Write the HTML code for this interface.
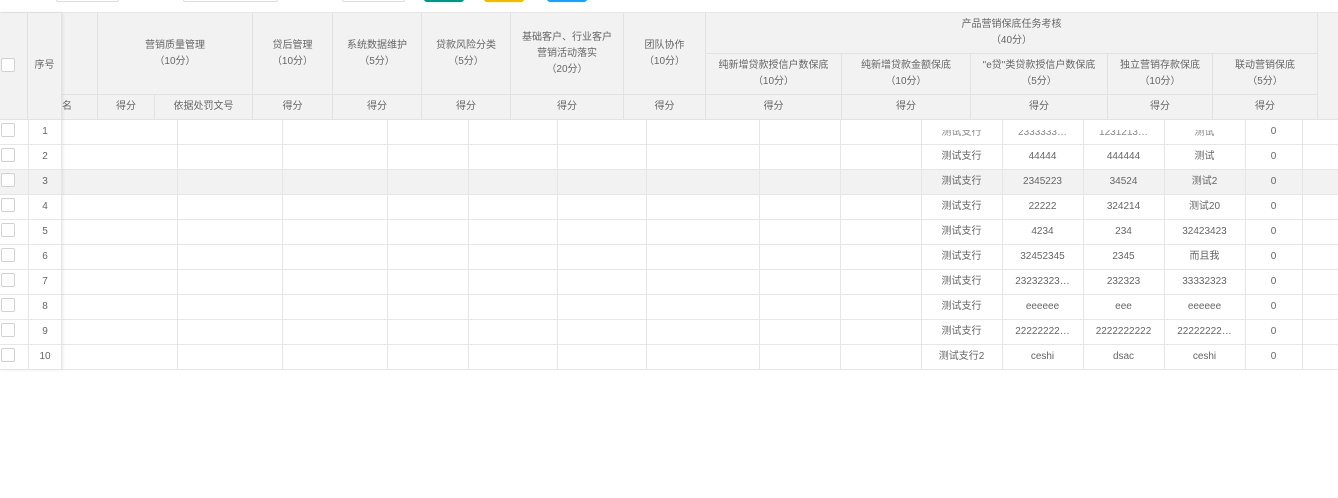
<!DOCTYPE html>
<html><head><meta charset="utf-8"><style>
body{margin:0;width:1338px;height:498px;background:#fff;position:relative;overflow:hidden;font-family:"Liberation Sans","Noto Sans CJK SC",sans-serif;font-size:10px;color:#666}
div{box-sizing:border-box}
.a{position:absolute}
.h{position:absolute;background:#f2f2f2;border-right:1px solid #e2e2e2;border-bottom:1px solid #e2e2e2;display:flex;align-items:center;justify-content:center;text-align:center;line-height:16px}
.vl{position:absolute;width:1px;background:#e6e6e6}
.hl{position:absolute;height:1px;background:#e6e6e6}
.c{position:absolute;height:25px;line-height:25px;text-align:center;white-space:nowrap;overflow:hidden}
.cb{position:absolute;left:1px;width:14px;height:14px;border:1px solid #d2d2d2;border-radius:2px;background:#fff}
</style></head><body>
<div class="a" style="left:56px;top:-4px;width:63px;height:6px;border:1px solid #ddd;border-radius:2px"></div>
<div class="a" style="left:183px;top:-4px;width:95px;height:6px;border:1px solid #ddd;border-radius:2px"></div>
<div class="a" style="left:342px;top:-4px;width:63px;height:6px;border:1px solid #ddd;border-radius:2px"></div>
<div class="a" style="left:424px;top:-4px;width:40px;height:6px;background:#009688;border-radius:3px"></div>
<div class="a" style="left:484px;top:-4px;width:40px;height:6px;background:#f5b800;border-radius:3px"></div>
<div class="a" style="left:547px;top:-4px;width:40px;height:6px;background:#1e9fff;border-radius:3px"></div>

<div class="hl" style="left:0;top:12px;width:1338px"></div>
<!-- header -->
<div class="h" style="left:62px;top:13px;width:36px;height:82px"></div>
<div class="h" style="left:62px;top:95px;width:36px;height:25px;justify-content:flex-start">名</div>
<div class="h" style="left:98px;top:13px;width:155px;height:82px">营销质量管理<br>（10分）</div>
<div class="h" style="left:98px;top:95px;width:57px;height:25px">得分</div>
<div class="h" style="left:155px;top:95px;width:98px;height:25px">依据处罚文号</div>
<div class="h" style="left:253px;top:13px;width:80px;height:82px">贷后管理<br>（10分）</div>
<div class="h" style="left:253px;top:95px;width:80px;height:25px">得分</div>
<div class="h" style="left:333px;top:13px;width:89px;height:82px">系统数据维护<br>（5分）</div>
<div class="h" style="left:333px;top:95px;width:89px;height:25px">得分</div>
<div class="h" style="left:422px;top:13px;width:89px;height:82px">贷款风险分类<br>（5分）</div>
<div class="h" style="left:422px;top:95px;width:89px;height:25px">得分</div>
<div class="h" style="left:511px;top:13px;width:113px;height:82px">基础客户、行业客户<br>营销活动落实<br>（20分）</div>
<div class="h" style="left:511px;top:95px;width:113px;height:25px">得分</div>
<div class="h" style="left:624px;top:13px;width:82px;height:82px">团队协作<br>（10分）</div>
<div class="h" style="left:624px;top:95px;width:82px;height:25px">得分</div>
<div class="h" style="left:706px;top:13px;width:612px;height:41px">产品营销保底任务考核<br>（40分）</div>
<div class="h" style="left:706px;top:54px;width:136px;height:41px">纯新增贷款授信户数保底<br>（10分）</div>
<div class="h" style="left:842px;top:54px;width:129px;height:41px">纯新增贷款金额保底<br>（10分）</div>
<div class="h" style="left:971px;top:54px;width:137px;height:41px">"e贷"类贷款授信户数保底<br>（5分）</div>
<div class="h" style="left:1108px;top:54px;width:105px;height:41px">独立营销存款保底<br>（10分）</div>
<div class="h" style="left:1213px;top:54px;width:105px;height:41px">联动营销保底<br>（5分）</div>
<div class="h" style="left:706px;top:95px;width:136px;height:25px">得分</div>
<div class="h" style="left:842px;top:95px;width:129px;height:25px">得分</div>
<div class="h" style="left:971px;top:95px;width:137px;height:25px">得分</div>
<div class="h" style="left:1108px;top:95px;width:105px;height:25px">得分</div>
<div class="h" style="left:1213px;top:95px;width:105px;height:25px">得分</div>
<div class="h" style="left:1318px;top:13px;width:20px;height:107px;border-right:0"></div>

<!-- body rows -->
<div class="a" style="left:0;top:170px;width:1338px;height:24px;background:#f2f2f2"></div>
<div class="hl" style="left:0;top:144px;width:1338px"></div>
<div class="hl" style="left:0;top:169px;width:1338px"></div>
<div class="hl" style="left:0;top:194px;width:1338px"></div>
<div class="hl" style="left:0;top:219px;width:1338px"></div>
<div class="hl" style="left:0;top:244px;width:1338px"></div>
<div class="hl" style="left:0;top:269px;width:1338px"></div>
<div class="hl" style="left:0;top:294px;width:1338px"></div>
<div class="hl" style="left:0;top:319px;width:1338px"></div>
<div class="hl" style="left:0;top:344px;width:1338px"></div>
<div class="hl" style="left:0;top:369px;width:1338px"></div>
<div class="vl" style="left:177px;top:120px;height:250px"></div>
<div class="vl" style="left:282px;top:120px;height:250px"></div>
<div class="vl" style="left:387px;top:120px;height:250px"></div>
<div class="vl" style="left:468px;top:120px;height:250px"></div>
<div class="vl" style="left:557px;top:120px;height:250px"></div>
<div class="vl" style="left:646px;top:120px;height:250px"></div>
<div class="vl" style="left:759px;top:120px;height:250px"></div>
<div class="vl" style="left:840px;top:120px;height:250px"></div>
<div class="vl" style="left:921px;top:120px;height:250px"></div>
<div class="vl" style="left:1002px;top:120px;height:250px"></div>
<div class="vl" style="left:1083px;top:120px;height:250px"></div>
<div class="vl" style="left:1164px;top:120px;height:250px"></div>
<div class="vl" style="left:1245px;top:120px;height:250px"></div>
<div class="vl" style="left:1302px;top:120px;height:250px"></div>

<!-- fixed left -->
<div class="a" style="left:0;top:13px;width:62px;height:357px;background:#fff;box-shadow:1px 0 3px rgba(0,0,0,.08)"></div>
<div class="h" style="left:0;top:13px;width:28px;height:107px"><div class="cb" style="top:45px"></div></div>
<div class="h" style="left:28px;top:13px;width:34px;height:107px">序号</div>
<div class="a" style="left:0;top:170px;width:62px;height:24px;background:#f2f2f2"></div>
<div class="vl" style="left:28px;top:120px;height:250px"></div>
<div class="vl" style="left:61px;top:120px;height:250px"></div>
<div class="hl" style="left:0;top:144px;width:62px"></div><div class="hl" style="left:0;top:169px;width:62px"></div><div class="hl" style="left:0;top:194px;width:62px"></div><div class="hl" style="left:0;top:219px;width:62px"></div><div class="hl" style="left:0;top:244px;width:62px"></div><div class="hl" style="left:0;top:269px;width:62px"></div><div class="hl" style="left:0;top:294px;width:62px"></div><div class="hl" style="left:0;top:319px;width:62px"></div><div class="hl" style="left:0;top:344px;width:62px"></div><div class="hl" style="left:0;top:369px;width:62px"></div>
<div class="cb" style="top:123px"></div><div class="cb" style="top:148px"></div><div class="cb" style="top:173px"></div><div class="cb" style="top:198px"></div><div class="cb" style="top:223px"></div><div class="cb" style="top:248px"></div><div class="cb" style="top:273px"></div><div class="cb" style="top:298px"></div><div class="cb" style="top:323px"></div><div class="cb" style="top:348px"></div>
<div class="c" style="left:28px;width:34px;top:119px">1</div>
<div class="c" style="left:28px;width:34px;top:144px">2</div>
<div class="c" style="left:28px;width:34px;top:169px">3</div>
<div class="c" style="left:28px;width:34px;top:194px">4</div>
<div class="c" style="left:28px;width:34px;top:219px">5</div>
<div class="c" style="left:28px;width:34px;top:244px">6</div>
<div class="c" style="left:28px;width:34px;top:269px">7</div>
<div class="c" style="left:28px;width:34px;top:294px">8</div>
<div class="c" style="left:28px;width:34px;top:319px">9</div>
<div class="c" style="left:28px;width:34px;top:344px">10</div>

<!-- data -->
<div class="a" style="left:921px;top:130px;width:324px;height:10px;overflow:hidden;color:#888">
<div class="c" style="left:0;width:81px;top:-10px">测试支行</div><div class="c" style="left:81px;width:81px;top:-10px">2333333…</div><div class="c" style="left:162px;width:81px;top:-10px">1231213…</div><div class="c" style="left:243px;width:81px;top:-10px">测试</div></div>
<div class="c" style="left:1245px;width:57px;top:119px">0</div>
<div class="c" style="left:921px;width:81px;top:144px">测试支行</div><div class="c" style="left:1002px;width:81px;top:144px">44444</div><div class="c" style="left:1083px;width:81px;top:144px">444444</div><div class="c" style="left:1164px;width:81px;top:144px">测试</div><div class="c" style="left:1245px;width:57px;top:144px">0</div>
<div class="c" style="left:921px;width:81px;top:169px">测试支行</div><div class="c" style="left:1002px;width:81px;top:169px">2345223</div><div class="c" style="left:1083px;width:81px;top:169px">34524</div><div class="c" style="left:1164px;width:81px;top:169px">测试2</div><div class="c" style="left:1245px;width:57px;top:169px">0</div>
<div class="c" style="left:921px;width:81px;top:194px">测试支行</div><div class="c" style="left:1002px;width:81px;top:194px">22222</div><div class="c" style="left:1083px;width:81px;top:194px">324214</div><div class="c" style="left:1164px;width:81px;top:194px">测试20</div><div class="c" style="left:1245px;width:57px;top:194px">0</div>
<div class="c" style="left:921px;width:81px;top:219px">测试支行</div><div class="c" style="left:1002px;width:81px;top:219px">4234</div><div class="c" style="left:1083px;width:81px;top:219px">234</div><div class="c" style="left:1164px;width:81px;top:219px">32423423</div><div class="c" style="left:1245px;width:57px;top:219px">0</div>
<div class="c" style="left:921px;width:81px;top:244px">测试支行</div><div class="c" style="left:1002px;width:81px;top:244px">32452345</div><div class="c" style="left:1083px;width:81px;top:244px">2345</div><div class="c" style="left:1164px;width:81px;top:244px">而且我</div><div class="c" style="left:1245px;width:57px;top:244px">0</div>
<div class="c" style="left:921px;width:81px;top:269px">测试支行</div><div class="c" style="left:1002px;width:81px;top:269px">23232323…</div><div class="c" style="left:1083px;width:81px;top:269px">232323</div><div class="c" style="left:1164px;width:81px;top:269px">33332323</div><div class="c" style="left:1245px;width:57px;top:269px">0</div>
<div class="c" style="left:921px;width:81px;top:294px">测试支行</div><div class="c" style="left:1002px;width:81px;top:294px">eeeeee</div><div class="c" style="left:1083px;width:81px;top:294px">eee</div><div class="c" style="left:1164px;width:81px;top:294px">eeeeee</div><div class="c" style="left:1245px;width:57px;top:294px">0</div>
<div class="c" style="left:921px;width:81px;top:319px">测试支行</div><div class="c" style="left:1002px;width:81px;top:319px">22222222…</div><div class="c" style="left:1083px;width:81px;top:319px">2222222222</div><div class="c" style="left:1164px;width:81px;top:319px">22222222…</div><div class="c" style="left:1245px;width:57px;top:319px">0</div>
<div class="c" style="left:921px;width:81px;top:344px">测试支行2</div><div class="c" style="left:1002px;width:81px;top:344px">ceshi</div><div class="c" style="left:1083px;width:81px;top:344px">dsac</div><div class="c" style="left:1164px;width:81px;top:344px">ceshi</div><div class="c" style="left:1245px;width:57px;top:344px">0</div>
</body></html>
